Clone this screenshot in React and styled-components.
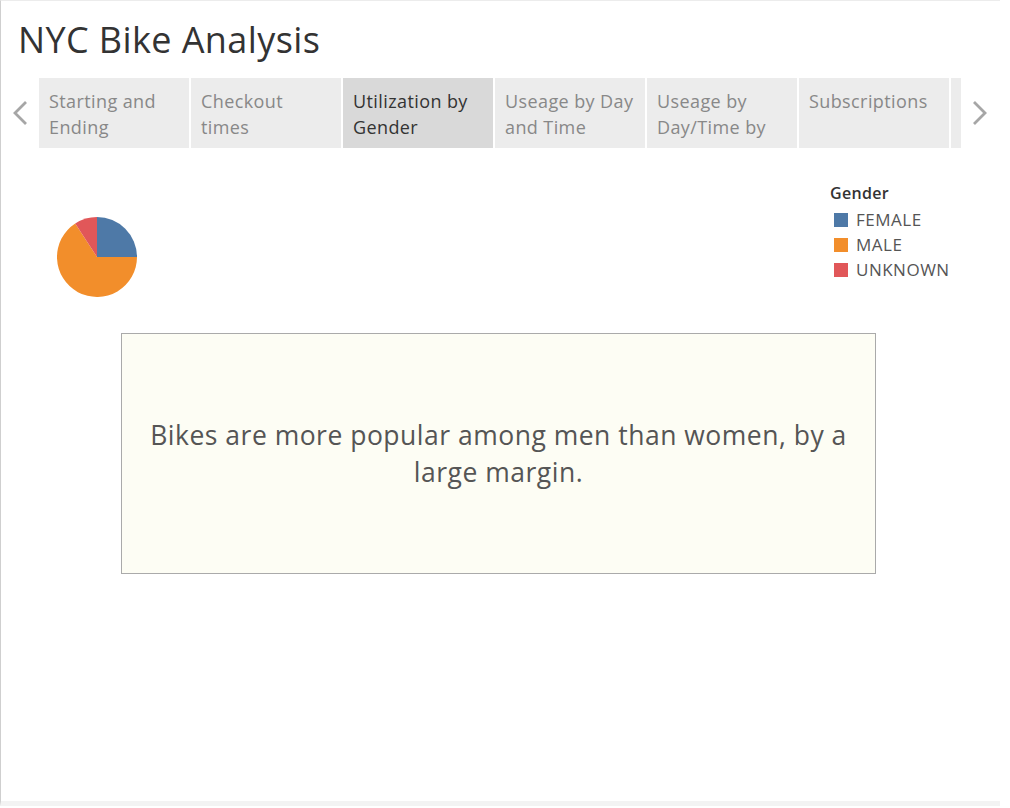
import React from "react";
import styled, { createGlobalStyle } from "styled-components";

const Global = createGlobalStyle`
  body {
    margin: 0;
    background: #fff;
    font-family: "Open Sans", "Noto Sans", sans-serif;
  }
`;

const Frame = styled.div`
  width: 999px;
  height: 800px;
  border-left: 1px solid #cfcfcf;
  border-top: 1px solid #ececec;
  border-bottom: 5px solid #f3f3f3;
  display: flex;
  flex-direction: column;
`;

const Title = styled.h1`
  margin: 0;
  padding: 17px 0 0 17px;
  height: 60px;
  box-sizing: border-box;
  font-weight: 400;
  font-size: 36px;
  line-height: 44px;
  color: #333;
  letter-spacing: 0.4px;
`;

const TabBar = styled.div`
  display: flex;
  align-items: stretch;
  height: 70px;
  margin-top: 17px;
`;

const Arrow = styled.div`
  width: ${(p) => p.w}px;
  display: flex;
  align-items: center;
  justify-content: center;
  flex-shrink: 0;
`;

const Tabs = styled.div`
  display: flex;
  gap: 2px;
  width: 922px;
  overflow: hidden;
  flex-shrink: 0;
`;

const Tab = styled.div`
  width: 150px;
  flex-shrink: 0;
  box-sizing: border-box;
  padding: 10px 10px 0 10px;
  background: ${(p) => (p.active ? "#d9d9d9" : "#ececec")};
  color: ${(p) => (p.active ? "#333" : "#888")};
  font-size: 18px;
  letter-spacing: 0.4px;
  line-height: 26px;
`;

const TopRow = styled.div`
  display: flex;
  justify-content: space-between;
  padding: 0 51px 0 56px;
`;

const Pie = styled.svg`
  margin-top: 69px;
`;

const Legend = styled.div`
  margin-top: 34px;
  width: 119px;
`;

const LegendTitle = styled.div`
  font-size: 16px;
  font-weight: 600;
  color: #333;
  line-height: 22px;
  letter-spacing: 0.3px;
  margin-bottom: 3px;
`;

const LegendItem = styled.div`
  display: flex;
  align-items: center;
  gap: 8px;
  padding-left: 4px;
  height: 25px;
  font-size: 17px;
  letter-spacing: 0.5px;
  color: #555;
  white-space: nowrap;
`;

const Swatch = styled.span`
  width: 14px;
  height: 14px;
  flex-shrink: 0;
  background: ${(p) => p.color};
`;

const Note = styled.div`
  margin: 36px 0 0 120px;
  width: 755px;
  height: 241px;
  box-sizing: border-box;
  border: 1px solid #aaa;
  background: #fdfdf4;
  display: flex;
  align-items: center;
  justify-content: center;
  text-align: center;
  font-size: 26.5px;
  letter-spacing: 0.5px;
  line-height: 37px;
  color: #555;
  padding: 0 24px;
`;

const tabs = [
  "Starting and Ending",
  "Checkout times",
  "Utilization by Gender",
  "Useage by Day and Time",
  "Useage by Day/Time by",
  "Subscriptions",
  "",
];

const slices = [
  { color: "#4e79a7", label: "FEMALE" },
  { color: "#f28e2b", label: "MALE" },
  { color: "#e15759", label: "UNKNOWN" },
];

function arc(cx, cy, r, a0, a1) {
  const p = (a) => [cx + r * Math.sin((a * Math.PI) / 180), cy - r * Math.cos((a * Math.PI) / 180)];
  const [x0, y0] = p(a0);
  const [x1, y1] = p(a1);
  const large = a1 - a0 > 180 ? 1 : 0;
  return `M${cx} ${cy} L${x0} ${y0} A${r} ${r} 0 ${large} 1 ${x1} ${y1} Z`;
}

export default function App() {
  return (
    <>
      <Global />
      <Frame>
        <Title>NYC Bike Analysis</Title>
        <TabBar>
          <Arrow w={38}>
            <svg width="20" height="28" viewBox="0 0 20 28">
              <path d="M16 3 L5 14 L16 25" fill="none" stroke="#a6a6a6" strokeWidth="2.8" />
            </svg>
          </Arrow>
          <Tabs>
            {tabs.map((t, i) => (
              <Tab key={i} active={i === 2}>{t}</Tab>
            ))}
          </Tabs>
          <Arrow w={38}>
            <svg width="20" height="28" viewBox="0 0 20 28">
              <path d="M4 3 L15 14 L4 25" fill="none" stroke="#a6a6a6" strokeWidth="2.8" />
            </svg>
          </Arrow>
        </TabBar>
        <TopRow>
          <Pie width="80" height="80" viewBox="0 0 80 80">
            <path d={arc(40, 40, 40, 0, 90)} fill={slices[0].color} />
            <path d={arc(40, 40, 40, 90, 327)} fill={slices[1].color} />
            <path d={arc(40, 40, 40, 327, 360)} fill={slices[2].color} />
          </Pie>
          <Legend>
            <LegendTitle>Gender</LegendTitle>
            {slices.map((s) => (
              <LegendItem key={s.label}>
                <Swatch color={s.color} />
                {s.label}
              </LegendItem>
            ))}
          </Legend>
        </TopRow>
        <Note>Bikes are more popular among men than women, by a large margin.</Note>
      </Frame>
    </>
  );
}
